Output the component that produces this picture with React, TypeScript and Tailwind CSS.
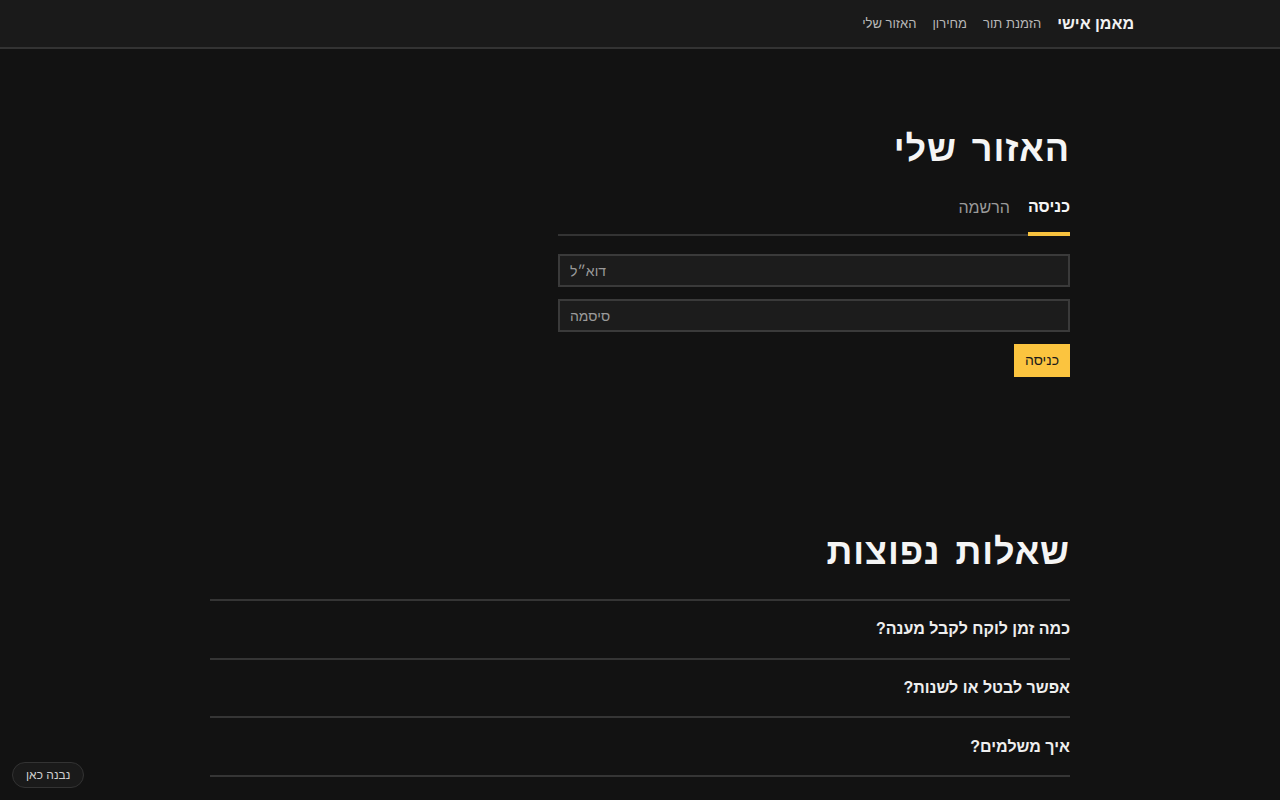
import React from "react";

const font = { fontFamily: '"Liberation Sans", "Noto Sans", sans-serif' };

const faqs = ["כמה זמן לוקח לקבל מענה?", "אפשר לבטל או לשנות?", "איך משלמים?"];

export default function App() {
  return (
    <div dir="rtl" style={font} className="min-h-screen bg-[#121212] text-[#eeeeee]">
      <header className="h-[49px] bg-[#1a1a1a] border-b-2 border-[#333333]">
        <div className="mx-auto max-w-[988px] h-full flex items-center gap-4">
          <span className="text-[16px] font-bold text-[#f2f2f2]">מאמן אישי</span>
          <nav className="flex items-center gap-4 text-[13px] text-[#b8b8b8]">
            <a>הזמנת תור</a>
            <a>מחירון</a>
            <a>האזור שלי</a>
          </nav>
        </div>
      </header>

      <main className="mx-auto max-w-[860px]">
        <section className="pt-[82px] max-w-[512px]">
          <h1 className="text-[36px] font-bold leading-none tracking-wide [word-spacing:4px] text-[#f5f5f5]">האזור שלי</h1>
          <div className="mt-[28px] flex gap-[18px] border-b-2 border-[#333333]">
            <button className="pb-[13px] text-[16px] font-bold text-[#f5f5f5] border-b-4 border-[#f7c23e] -mb-[2px]">כניסה</button>
            <button className="pb-[13px] text-[16px] text-[#9a9a9a]">הרשמה</button>
          </div>
          <form className="mt-[18px] flex flex-col gap-3">
            <input
              placeholder="דוא״ל"
              className="h-[33px] w-full bg-[#1c1c1c] border-2 border-[#3a3a3a] px-[10px] text-left text-[14px] text-[#dddddd] placeholder-[#9a9a9a] outline-none"
            />
            <input
              placeholder="סיסמה"
              type="password"
              className="h-[33px] w-full bg-[#1c1c1c] border-2 border-[#3a3a3a] px-[10px] text-left text-[14px] text-[#dddddd] placeholder-[#9a9a9a] outline-none"
            />
            <div className="flex">
              <button type="button" className="h-[33px] px-[11px] bg-[#fbc43f] text-[#1a1a1a] text-[14px]">כניסה</button>
            </div>
          </form>
        </section>

        <section className="pt-[157px]">
          <h2 className="text-[36px] font-bold leading-none tracking-wide [word-spacing:4px] text-[#f5f5f5]">שאלות נפוצות</h2>
          <div className="mt-[29px] border-t-2 border-[#353535]">
            {faqs.map((q) => (
              <div key={q} className="h-[58.7px] flex items-center border-b-2 border-[#353535] text-[16px] font-bold text-[#eeeeee]">
                {q}
              </div>
            ))}
          </div>
        </section>
      </main>

      <div className="fixed left-[12px] bottom-[12px] h-[26px] px-[13px] flex items-center rounded-full bg-[#1a1a1a] border border-[#333333] text-[12px] text-[#cfcfcf]">
        נבנה כאן
      </div>
    </div>
  );
}
